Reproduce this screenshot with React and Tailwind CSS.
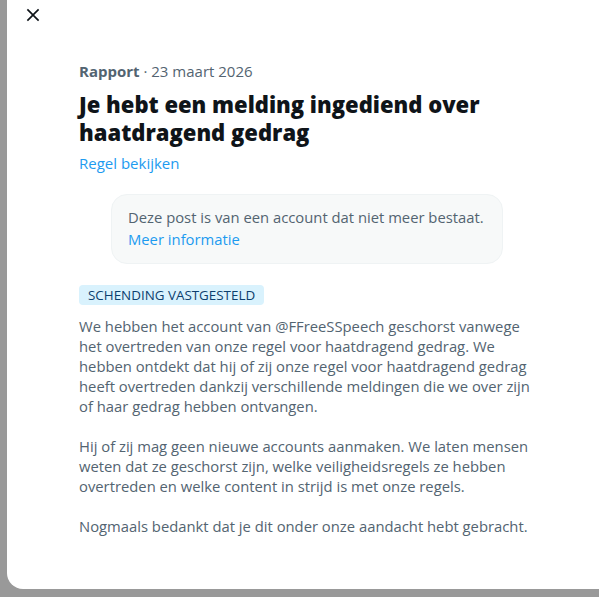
import React from "react";

export default function App() {
  const font = { fontFamily: '"Open Sans", "Liberation Sans", sans-serif' };
  return (
    <div className="w-[599px] h-[597px] overflow-hidden bg-[#999999] pl-[7px] pb-[8px]" style={font}>
      <div className="flex flex-col h-full w-[620px] bg-white rounded-bl-[16px] pt-[5px] pl-[16px]">
        <button className="w-[20px] h-[20px] flex items-center justify-center">
          <svg viewBox="0 0 24 24" width="20" height="20" fill="#0f1419">
            <path d="M10.59 12L4.54 5.96l1.42-1.42L12 10.59l6.04-6.05 1.42 1.42L13.41 12l6.05 6.04-1.42 1.42L12 13.41l-6.04 6.05-1.42-1.42L10.59 12z" />
          </svg>
        </button>

        <div className="flex flex-col items-start mt-[36px] ml-[56px] w-[456px]">
          <div className="text-[15px] leading-[20px] text-[#536471]">
            <span className="font-bold">Rapport</span> · 23 maart 2026
          </div>
          <h1 className="mt-[9px] text-[22px] leading-[28px] font-extrabold text-[#0f1419]">
            Je hebt een melding ingediend over haatdragend gedrag
          </h1>
          <div className="mt-[7px] text-[15px] leading-[20px] text-[#1d9bf0]">Regel bekijken</div>

          <div className="self-center mt-[21px] w-[392px] rounded-[16px] border border-[#eff3f4] bg-[#f7f9f9] pl-[16px] pr-[8px] pt-[11px] pb-[13px]">
            <div className="text-[14.8px] leading-[22px] text-[#536471]">Deze post is van een account dat niet meer bestaat.</div>
            <div className="text-[14.8px] leading-[22px] text-[#1d9bf0]">Meer informatie</div>
          </div>

          <div className="mt-[21px] rounded-[4px] bg-[#d9f2fd] px-[9px] text-[13.4px] leading-[20px] text-[#0c3f6e]">
            SCHENDING VASTGESTELD
          </div>

          <div className="mt-[11px] flex flex-col gap-[20px] text-[14.8px] leading-[20px] text-[#536471]">
            <p>
              We hebben het account van @FFreeSSpeech geschorst vanwege het overtreden van onze regel voor
              haatdragend gedrag. We hebben ontdekt dat hij of zij onze regel voor haatdragend gedrag heeft
              overtreden dankzij verschillende meldingen die we over zijn of haar gedrag hebben ontvangen.
            </p>
            <p>
              Hij of zij mag geen nieuwe accounts aanmaken. We laten mensen weten dat ze geschorst zijn, welke
              veiligheidsregels ze hebben overtreden en welke content in strijd is met onze regels.
            </p>
            <p>Nogmaals bedankt dat je dit onder onze aandacht hebt gebracht.</p>
          </div>
        </div>
      </div>
    </div>
  );
}
